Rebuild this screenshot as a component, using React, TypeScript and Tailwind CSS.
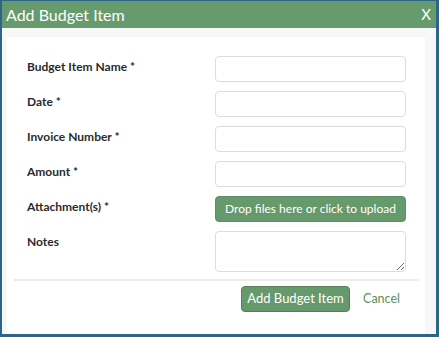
// Add Budget Item modal dialog.

const FIELDS = ["Budget Item Name *", "Date *", "Invoice Number *", "Amount *"];

function Label({ children }: { children: React.ReactNode }) {
  return <div className="w-[188px] shrink-0 pt-[3px] text-[12px] font-bold leading-4 text-[#2b2b2b]">{children}</div>;
}

export default function App() {
  return (
    <div
      className="flex h-[337px] w-[439px] flex-col border-t border-r-[3px] border-b-[3px] border-l-2 border-[#2b6689] bg-[#f7f7f7]"
      style={{ fontFamily: "Lato, 'Noto Sans', sans-serif" }}
    >
      <div className="flex h-[27px] shrink-0 items-center justify-between bg-[#679a6c] pr-[5px] pl-[4px] text-white">
        <span className="text-[16px] leading-none">Add Budget Item</span>
        <span className="text-[15px] leading-none">X</span>
      </div>
      <div className="flex flex-1 flex-col pt-[9px] pr-[11px] pl-[5px]">
        <div className="flex flex-1 flex-col bg-white">
          <div className="flex flex-col gap-[9px] pt-[19px] pl-[20px]">
            {FIELDS.map((f) => (
              <div key={f} className="flex items-start">
                <Label>{f}</Label>
                <input className="h-[26px] w-[191px] shrink-0 rounded-[4px] border border-[#dcdcdc] bg-white outline-none" />
              </div>
            ))}
            <div className="flex items-start">
              <Label>Attachment(s) *</Label>
              <button className="h-[26px] w-[191px] shrink-0 overflow-hidden rounded-[4px] border border-[#5e8f63] bg-[#66996b] px-0 text-[12px] whitespace-nowrap text-white">
                Drop files here or click to upload
              </button>
            </div>
            <div className="flex items-start">
              <Label>Notes</Label>
              <textarea className="h-[41px] w-[191px] shrink-0 rounded-[4px] border border-[#dcdcdc] bg-white outline-none" />
            </div>
          </div>
          <div className="mt-[7px] mr-[6px] ml-[7px] h-[2px] bg-[#ececec]" />
          <div className="flex items-center justify-end gap-[13px] pt-[5px] pr-[25px]">
            <button className="h-[26px] w-[109px] rounded-[4px] border border-[#557f59] bg-[#66996b] text-[13px] text-white">
              Add Budget Item
            </button>
            <span className="text-[12.5px] text-[#5b9163]">Cancel</span>
          </div>
        </div>
      </div>
    </div>
  );
}
